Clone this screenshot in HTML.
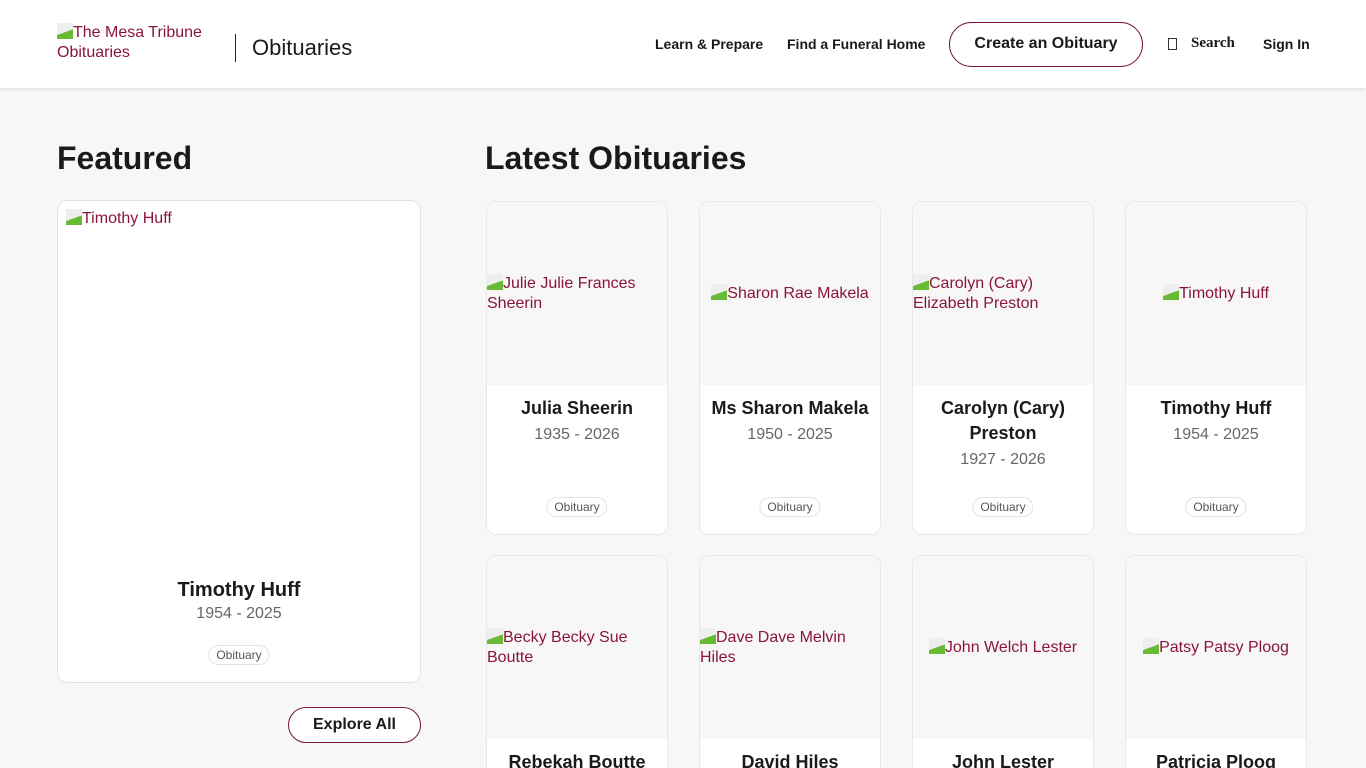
<!DOCTYPE html>
<html><head><meta charset="utf-8"><style>
*{box-sizing:border-box;margin:0;padding:0}
html,body{width:1366px;height:768px;overflow:hidden}
body{background:#f7f7f7;font-family:"Liberation Sans",Arial,sans-serif;color:#1a1a1a;position:relative}
.hdr{position:absolute;left:0;top:0;width:1366px;height:88px;background:#fff;box-shadow:0 1px 4px rgba(0,0,0,.12)}
.a{position:absolute}
.alt{color:#8a1538;font-size:16px;line-height:20px}
.i{display:inline-block;width:16px;height:16px;vertical-align:-2px;background:linear-gradient(160deg,#eee 55%,#6b3 56%)}
.nav{font-size:14px;font-weight:bold;top:36px}
.card{position:absolute;width:182px;height:334px;background:#fff;border:1px solid #e8e8e8;border-radius:10px;overflow:hidden}
.card .img{position:absolute;left:0;top:0;width:100%;height:183px;background:#f7f7f7}
.card .img .alt{position:absolute;left:0;width:100%}
.nm{position:absolute;left:0;top:194px;width:100%;text-align:center;font-weight:bold;font-size:18px;line-height:25px}
.dt{position:absolute;left:0;width:100%;text-align:center;color:#666;font-size:16px}
.tag{position:absolute;left:50%;transform:translateX(-50%);top:295px;border:1px solid #e3e3e3;border-radius:10px;font-size:12px;color:#555;padding:2px 7px;line-height:14px}
.btn{position:absolute;border:1px solid #7a1634;border-radius:24px;background:#fff;font-weight:bold;text-align:center}
</style></head><body>
<div class="hdr">
 <div class="a alt" style="left:57px;top:23px"><span class="i"></span>The Mesa Tribune<br>Obituaries</div>
 <div class="a" style="left:235px;top:34px;width:1px;height:28px;background:#222"></div>
 <div class="a" style="left:252px;top:35px;font-size:22px">Obituaries</div>
 <div class="a nav" style="left:655px">Learn &amp; Prepare</div>
 <div class="a nav" style="left:787px">Find a Funeral Home</div>
 <div class="btn" style="left:949px;top:22px;width:194px;height:45px;line-height:42px;font-size:16px">Create an Obituary</div>
 <div class="a" style="left:1168px;top:38px;width:9px;height:12px;border:1px solid #333"></div>
 <div class="a" style="left:1191px;top:35px;font-family:'Liberation Serif',serif;font-weight:bold;font-size:15px">Search</div>
 <div class="a nav" style="left:1263px">Sign In</div>
</div>
<div class="a" style="left:57px;top:140px;font-size:32px;font-weight:bold">Featured</div>
<div class="a" style="left:485px;top:140px;font-size:32px;font-weight:bold">Latest Obituaries</div>
<div class="a" style="left:57px;top:200px;width:364px;height:483px;background:#fff;border:1px solid #e3e3e3;border-radius:10px">
 <div class="a alt" style="left:8px;top:8px"><span class="i"></span>Timothy Huff</div>
 <div class="a" style="left:0;top:378px;width:100%;text-align:center;font-weight:bold;font-size:20px">Timothy Huff</div>
 <div class="a" style="left:0;top:404px;width:100%;text-align:center;color:#666;font-size:16px">1954 - 2025</div>
 <div class="tag" style="top:444px">Obituary</div>
</div>
<div class="btn" style="left:288px;top:707px;width:133px;height:36px;line-height:33px;font-size:16px">Explore All</div>

<div class="card" style="left:486px;top:201px"><div class="img"><div class="alt" style="top:72px"><span class="i"></span>Julie Julie Frances Sheerin</div></div><div class="nm">Julia Sheerin</div><div class="dt" style="top:224px">1935 - 2026</div><div class="tag">Obituary</div></div>
<div class="card" style="left:699px;top:201px"><div class="img"><div class="alt" style="top:82px;text-align:center"><span class="i"></span>Sharon Rae Makela</div></div><div class="nm">Ms Sharon Makela</div><div class="dt" style="top:224px">1950 - 2025</div><div class="tag">Obituary</div></div>
<div class="card" style="left:912px;top:201px"><div class="img"><div class="alt" style="top:72px"><span class="i"></span>Carolyn (Cary)<br>Elizabeth Preston</div></div><div class="nm" style="padding:0 20px">Carolyn (Cary) Preston</div><div class="dt" style="top:249px">1927 - 2026</div><div class="tag">Obituary</div></div>
<div class="card" style="left:1125px;top:201px"><div class="img"><div class="alt" style="top:82px;text-align:center"><span class="i"></span>Timothy Huff</div></div><div class="nm">Timothy Huff</div><div class="dt" style="top:224px">1954 - 2025</div><div class="tag">Obituary</div></div>

<div class="card" style="left:486px;top:555px"><div class="img"><div class="alt" style="top:72px"><span class="i"></span>Becky Becky Sue<br>Boutte</div></div><div class="nm">Rebekah Boutte</div></div>
<div class="card" style="left:699px;top:555px"><div class="img"><div class="alt" style="top:72px"><span class="i"></span>Dave Dave Melvin<br>Hiles</div></div><div class="nm">David Hiles</div></div>
<div class="card" style="left:912px;top:555px"><div class="img"><div class="alt" style="top:82px;text-align:center"><span class="i"></span>John Welch Lester</div></div><div class="nm">John Lester</div></div>
<div class="card" style="left:1125px;top:555px"><div class="img"><div class="alt" style="top:82px;text-align:center"><span class="i"></span>Patsy Patsy Ploog</div></div><div class="nm">Patricia Ploog</div></div>
</body></html>
